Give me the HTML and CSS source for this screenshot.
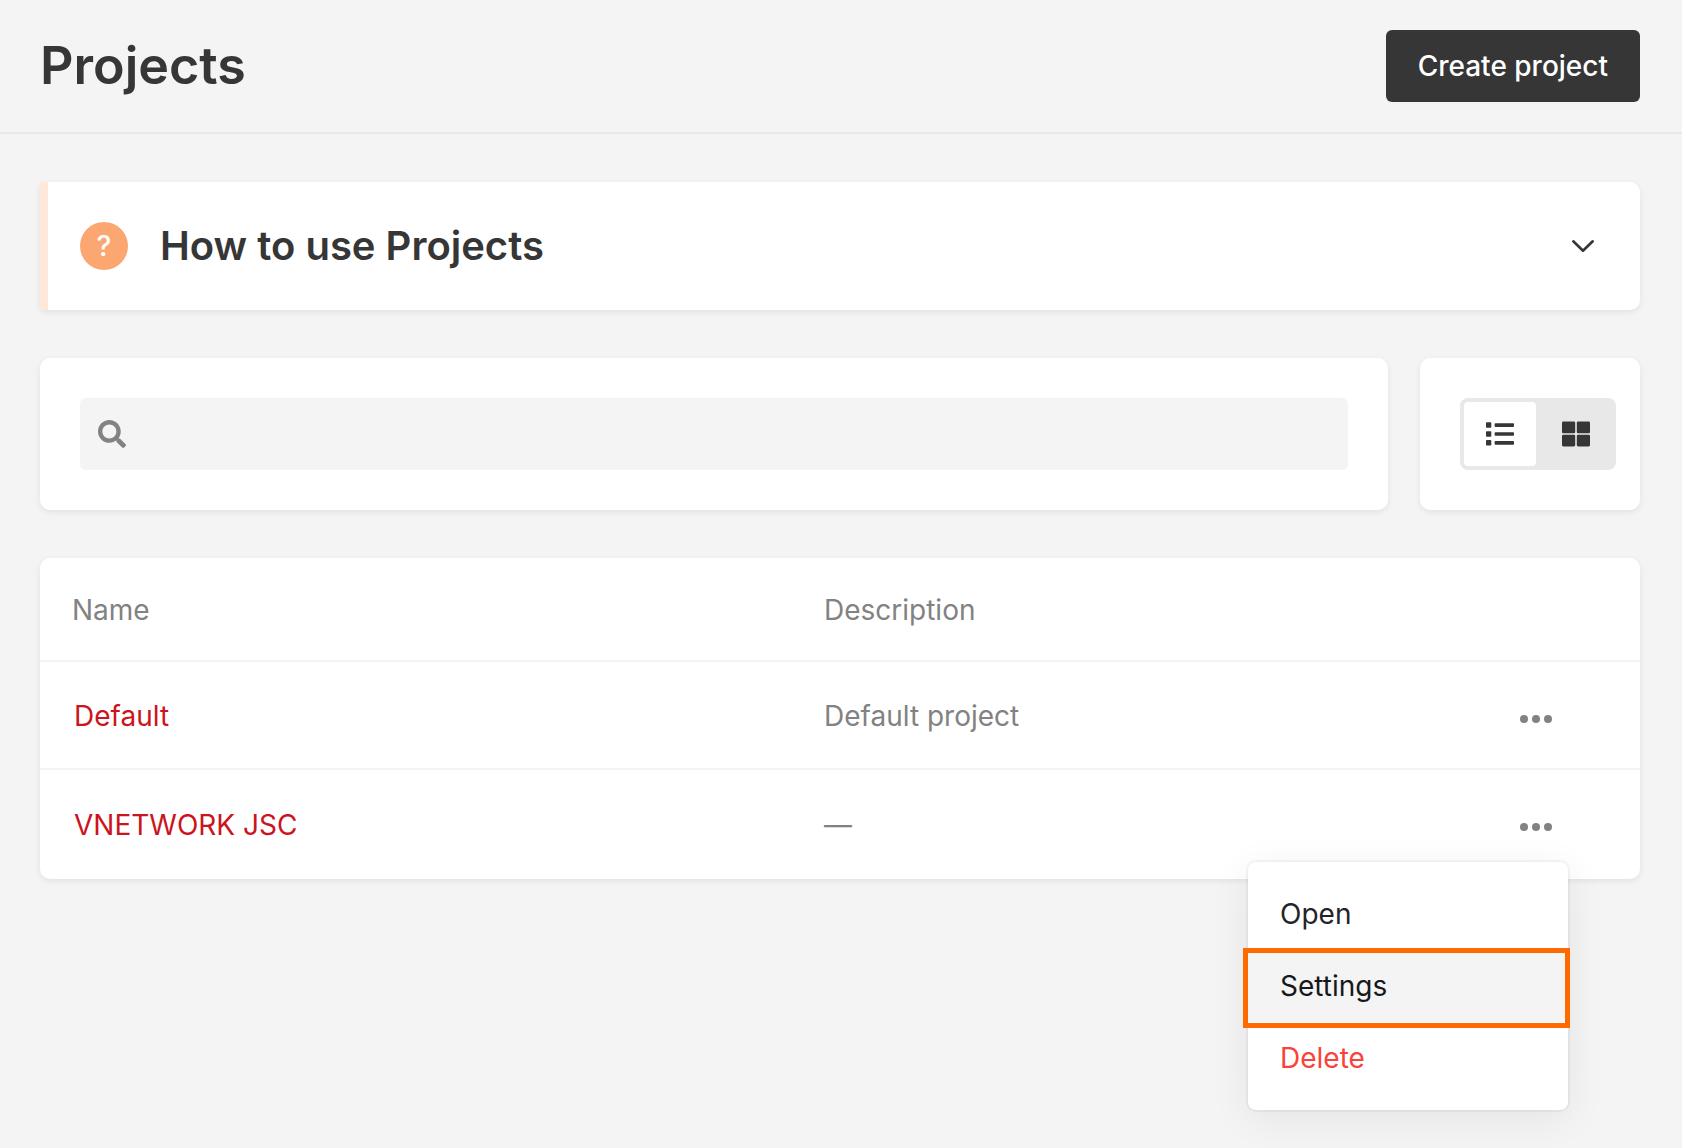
FILE: index.html
```html
<!DOCTYPE html>
<html lang="en">
<head>
  <meta charset="utf-8">
  <meta name="viewport" content="width=device-width, initial-scale=1">
  <title>Projects</title>
  <link rel="stylesheet" href="styles.css">
</head>
<body>
  <header class="page-header">
    <h1 class="page-title">Projects</h1>
    <button class="btn-primary" type="button">Create project</button>
  </header>

  <main class="content">
    <section class="card help">
      <span class="help-badge" aria-hidden="true">?</span>
      <h2 class="help-title">How to use Projects</h2>
      <button class="help-toggle" type="button" aria-label="Expand">
        <svg width="26" height="14" viewBox="0 0 26 14" fill="none" stroke="currentColor" stroke-width="2.600" stroke-linecap="round" stroke-linejoin="round"><path d="M3.300 2.300 13 11.700 22.700 2.300"/></svg>
      </button>
    </section>

    <div class="toolbar">
      <div class="card search-card">
        <label class="search">
          <svg class="search-icon" width="28" height="28" viewBox="0 0 512 512" fill="currentColor" aria-hidden="true"><path d="M505 442.700 405.300 343c-4.500-4.500-10.600-7-17-7H372c27.600-35.300 44-79.700 44-128C416 93.100 322.900 0 208 0S0 93.100 0 208s93.100 208 208 208c48.300 0 92.700-16.400 128-44v16.300c0 6.400 2.500 12.500 7 17l99.700 99.700c9.400 9.400 24.600 9.400 33.900 0l28.300-28.300c9.400-9.400 9.400-24.600.1-34zM208 336c-70.700 0-128-57.200-128-128 0-70.700 57.200-128 128-128 70.700 0 128 57.200 128 128 0 70.700-57.200 128-128 128z"/></svg>
          <input class="search-input" type="search" aria-label="Search projects">
        </label>
      </div>
      <div class="card view-card">
        <div class="view-switch">
          <button class="view-btn view-btn-active" type="button" aria-label="List view">
            <svg width="28" height="24" viewBox="0 0 28 24" fill="currentColor"><rect y="0.300" width="5.300" height="5.500" rx="0.800"/><rect y="9.200" width="5.300" height="5.500" rx="0.800"/><rect y="18.100" width="5.300" height="5.500" rx="0.800"/><rect x="8.600" y="1.300" width="19.400" height="3.600" rx="0.800"/><rect x="8.600" y="10.200" width="19.400" height="3.600" rx="0.800"/><rect x="8.600" y="19.100" width="19.400" height="3.600" rx="0.800"/></svg>
          </button>
          <button class="view-btn" type="button" aria-label="Grid view">
            <svg width="28" height="26" viewBox="0 0 28 26" fill="currentColor"><rect y="0.500" width="13.200" height="11.700" rx="1.300"/><rect x="14.800" y="0.500" width="13.200" height="11.700" rx="1.300"/><rect y="13.700" width="13.200" height="11.700" rx="1.300"/><rect x="14.800" y="13.700" width="13.200" height="11.700" rx="1.300"/></svg>
          </button>
        </div>
      </div>
    </div>

    <section class="card">
      <table class="projects">
        <thead>
          <tr>
            <th class="col-name" scope="col">Name</th>
            <th scope="col">Description</th>
            <th class="col-actions"></th>
          </tr>
        </thead>
        <tbody>
          <tr>
            <td><a class="project-link" href="#default">Default</a></td>
            <td>Default project</td>
            <td class="col-actions">
              <div class="actions">
                <button class="more" type="button" aria-label="Actions for Default">
                  <svg width="32" height="8" viewBox="0 0 32 8" fill="currentColor"><circle cx="4" cy="4" r="4"/><circle cx="16" cy="4" r="4"/><circle cx="28" cy="4" r="4"/></svg>
                </button>
              </div>
            </td>
          </tr>
          <tr>
            <td><a class="project-link" href="#vnetwork">VNETWORK JSC</a></td>
            <td>—</td>
            <td class="col-actions">
              <div class="actions">
                <button class="more" type="button" aria-label="Actions for VNETWORK JSC" aria-expanded="true">
                  <svg width="32" height="8" viewBox="0 0 32 8" fill="currentColor"><circle cx="4" cy="4" r="4"/><circle cx="16" cy="4" r="4"/><circle cx="28" cy="4" r="4"/></svg>
                </button>
                <div class="menu">
                  <button class="menu-item" type="button">Open</button>
                  <button class="menu-item menu-item-active" type="button">Settings</button>
                  <button class="menu-item menu-item-danger" type="button">Delete</button>
                </div>
              </div>
            </td>
          </tr>
        </tbody>
      </table>
    </section>
  </main>
</body>
</html>
```

FILE: styles.css
```css
* {
  box-sizing: border-box;
}

body {
  min-height: 100vh;
  margin: 0;
  background: #f4f4f4;
  color: #363636;
  font-family: Inter, "Liberation Sans", sans-serif;
  font-size: 28px;
  line-height: 40px;
}

button {
  border: 0;
  padding: 0;
  background: none;
  color: inherit;
  font: inherit;
  cursor: pointer;
}

svg {
  display: block;
}

.page-header {
  display: flex;
  align-items: center;
  justify-content: space-between;
  padding: 30px 42px 30px 40px;
  border-bottom: 2px solid #e8e8e8;
}

.page-title {
  margin: 0;
  font-size: 52px;
  font-weight: 600;
  line-height: 64px;
}

.btn-primary {
  padding: 16px 32px;
  border-radius: 6px;
  background: #363636;
  color: #fff;
  font-weight: 500;
}

.content {
  display: flex;
  flex-direction: column;
  gap: 48px;
  padding: 48px 42px 48px 40px;
}

.card {
  border-radius: 10px;
  background: #fff;
  box-shadow: 0 2px 6px rgba(0, 0, 0, 0.08);
}

.help {
  display: flex;
  align-items: center;
  gap: 32px;
  padding: 40px 44px 40px 32px;
  border-left: 8px solid #ffe8d9;
  border-radius: 0 10px 10px 0;
}

.help-badge {
  width: 48px;
  height: 48px;
  border-radius: 50%;
  background: #fca671;
  color: #fff;
  font-weight: 500;
  line-height: 48px;
  text-align: center;
}

.help-title {
  flex: 1;
  margin: 0;
  font-size: 40px;
  font-weight: 600;
  line-height: 48px;
}

.toolbar {
  display: flex;
  gap: 32px;
}

.search-card {
  flex: 1;
  padding: 40px;
}

.search {
  display: flex;
  align-items: center;
  gap: 16px;
  height: 72px;
  padding: 0 18px;
  border-radius: 6px;
  background: #f4f4f4;
  color: #828282;
}

.search-input {
  flex: 1;
  min-width: 0;
  border: 0;
  outline: 0;
  background: none;
  color: #363636;
  font: inherit;
}

.view-card {
  padding: 40px 24px 40px 40px;
}

.view-switch {
  display: flex;
  padding: 4px 0 4px 4px;
  border-radius: 8px;
  background: #e8e8e8;
}

.view-btn {
  display: grid;
  place-items: center;
  width: 80px;
  height: 64px;
  border-radius: 4px;
}

.view-btn-active {
  width: 72px;
  background: #fff;
}

.projects {
  width: 100%;
  border-collapse: collapse;
  table-layout: fixed;
  color: #828282;
}

.projects th {
  padding: 32px 32px 30px;
  font-weight: 400;
  text-align: left;
}

.projects td {
  padding: 34px 32px 32px;
  border-top: 2px solid #f3f3f3;
}

.projects tr:last-child td {
  padding-bottom: 34px;
  padding-top: 35px;
}

.projects .col-name {
  width: 47%;
}

.projects .col-actions,
.projects tr:last-child .col-actions {
  width: 168px;
  padding: 25px 72px 0 32px;
  vertical-align: top;
}

.project-link {
  padding-left: 2px;
  color: #cc1420;
  text-decoration: none;
}

.actions {
  position: relative;
}

.more {
  display: grid;
  place-items: center;
  width: 64px;
  height: 64px;
  color: #828282;
}

.menu {
  position: absolute;
  top: 100%;
  right: 0;
  z-index: 1;
  width: 320px;
  margin-top: 3px;
  padding: 16px 0;
  border-radius: 8px;
  background: #fff;
  box-shadow: 0 0 0 2px rgba(0, 0, 0, 0.04), 0 8px 40px rgba(0, 0, 0, 0.07);
}

.menu-item {
  position: relative;
  display: block;
  width: 100%;
  padding: 16px 32px;
  color: #212529;
  text-align: left;
}

.menu-item-active {
  background: #f4f4f4;
  color: #16181b;
}

.menu-item-active::after {
  content: "";
  position: absolute;
  inset: -2px -2px -6px -5px;
  z-index: 1;
  border: 5px solid #ff6a00;
}

.menu-item-danger {
  color: #f9423a;
}
```
